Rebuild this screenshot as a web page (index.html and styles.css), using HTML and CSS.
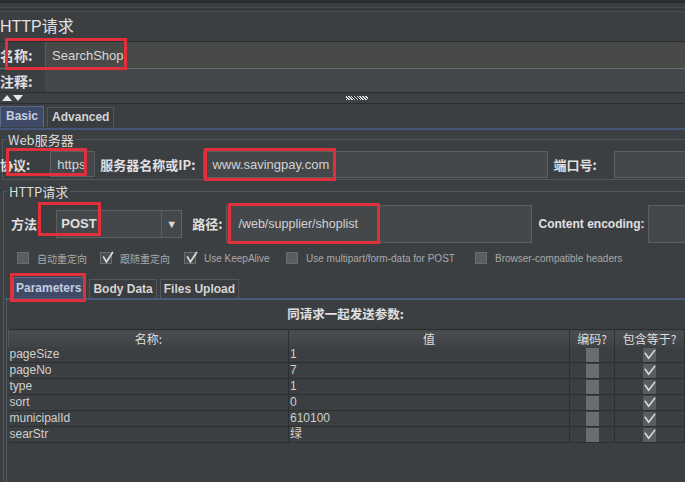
FILE: index.html
```html
<!DOCTYPE html>
<html>
<head>
<meta charset="utf-8">
<link rel="stylesheet" href="styles.css">
</head>
<body>
<div class="app">
  <div class="topbar"></div>
  <div class="title">HTTP请求</div>
  <div class="field-row name-row">
    <span class="lbl">名称:</span>
    <div class="txt">SearchShop</div>
  </div>
  <div class="field-row comment-row">
    <span class="lbl">注释:</span>
    <div class="txt"></div>
  </div>
  <div class="splitter">
    <svg class="arrows" width="24" height="8" viewBox="0 0 24 8"><polygon points="1,8 6,2 11,8" fill="#e8e8e8"/><polygon points="12,2 22,2 17,8" fill="#e8e8e8"/></svg>
    <span class="grip"></span>
  </div>
  <div class="tabbar main-tabs">
    <span class="tab active">Basic</span>
    <span class="tab">Advanced</span>
  </div>

  <fieldset class="group web">
    <legend>Web服务器</legend>
    <div class="srv-row">
      <span class="lbl proto-lbl">协议:</span>
      <div class="input proto">https</div>
      <span class="lbl host-lbl">服务器名称或IP:</span>
      <div class="input host">www.savingpay.com</div>
      <span class="lbl port-lbl">端口号:</span>
      <div class="input port"></div>
    </div>
  </fieldset>

  <fieldset class="group http">
    <legend>HTTP请求</legend>
    <div class="method-row">
      <span class="lbl method-lbl">方法:</span>
      <div class="select"><span class="sel-val">POST</span><span class="sel-btn">▼</span></div>
      <span class="lbl path-lbl">路径:</span>
      <div class="input path">/web/supplier/shoplist</div>
      <span class="lbl enc-lbl">Content encoding:</span>
      <div class="input enc"></div>
    </div>
    <div class="opt-row">
      <label class="opt o1"><span class="cb"></span><span class="cn">自动重定向</span></label>
      <label class="opt o2"><span class="cb on"><svg viewBox="0 0 12 12"><polyline points="2,5 5,10 11,1" fill="none" stroke="#dcdcdc" stroke-width="1.6"/></svg></span><span class="cn">跟随重定向</span></label>
      <label class="opt o3"><span class="cb on"><svg viewBox="0 0 12 12"><polyline points="2,5 5,10 11,1" fill="none" stroke="#dcdcdc" stroke-width="1.6"/></svg></span><span>Use KeepAlive</span></label>
      <label class="opt o4"><span class="cb"></span><span>Use multipart/form-data for POST</span></label>
      <label class="opt o5"><span class="cb"></span><span>Browser-compatible headers</span></label>
    </div>
    <div class="tabbar param-tabs">
      <span class="tab active">Parameters</span>
      <span class="tab">Body Data</span>
      <span class="tab">Files Upload</span>
    </div>
    <div class="panel">
      <div class="caption">同请求一起发送参数:</div>
      <table class="params">
        <colgroup><col class="c1"><col class="c2"><col class="c3"><col class="c4"></colgroup>
        <thead>
          <tr><th>名称:</th><th>值</th><th>编码?</th><th>包含等于?</th></tr>
        </thead>
        <tbody>
          <tr><td>pageSize</td><td>1</td><td class="ck"><span class="tcb"></span></td><td class="ck"><span class="tcb on"><svg viewBox="0 0 14 14"><polyline points="2,5 6,11 13,2" fill="none" stroke="#e4e4e4" stroke-width="1.6"/></svg></span></td></tr>
          <tr><td>pageNo</td><td>7</td><td class="ck"><span class="tcb"></span></td><td class="ck"><span class="tcb on"><svg viewBox="0 0 14 14"><polyline points="2,5 6,11 13,2" fill="none" stroke="#e4e4e4" stroke-width="1.6"/></svg></span></td></tr>
          <tr><td>type</td><td>1</td><td class="ck"><span class="tcb"></span></td><td class="ck"><span class="tcb on"><svg viewBox="0 0 14 14"><polyline points="2,5 6,11 13,2" fill="none" stroke="#e4e4e4" stroke-width="1.6"/></svg></span></td></tr>
          <tr><td>sort</td><td>0</td><td class="ck"><span class="tcb"></span></td><td class="ck"><span class="tcb on"><svg viewBox="0 0 14 14"><polyline points="2,5 6,11 13,2" fill="none" stroke="#e4e4e4" stroke-width="1.6"/></svg></span></td></tr>
          <tr><td>municipalId</td><td>610100</td><td class="ck"><span class="tcb"></span></td><td class="ck"><span class="tcb on"><svg viewBox="0 0 14 14"><polyline points="2,5 6,11 13,2" fill="none" stroke="#e4e4e4" stroke-width="1.6"/></svg></span></td></tr>
          <tr><td>searStr</td><td>绿</td><td class="ck"><span class="tcb"></span></td><td class="ck"><span class="tcb on"><svg viewBox="0 0 14 14"><polyline points="2,5 6,11 13,2" fill="none" stroke="#e4e4e4" stroke-width="1.6"/></svg></span></td></tr>
        </tbody>
      </table>
    </div>
  </fieldset>

  <div class="mark m-name"></div>
  <div class="mark m-proto"></div>
  <div class="mark m-host"></div>
  <div class="mark m-method"></div>
  <div class="mark m-path"></div>
  <div class="mark m-params"></div>
</div>
</body>
</html>
```

FILE: styles.css
```css
html, body {
  margin: 0;
  padding: 0;
  background: #3c3f41;
}
.app {
  position: relative;
  width: 685px;
  height: 482px;
  overflow: hidden;
  background: #3c3f41;
  color: #d6d6d6;
  font-family: "Liberation Sans", "Noto Sans CJK SC", sans-serif;
  font-size: 12px;
}
.topbar {
  height: 9px;
  border-top: 3px solid #2a2c2e;
  background: linear-gradient(#3a3d40 0 4px, #45484b 4px 5px, #383b3e 5px 8px, #4a4d50 8px 9px);
}
.title {
  height: 29px;
  line-height: 29px;
  font-size: 16px;
  color: #e2e2e2;
  font-family: "Liberation Sans", "Noto Sans CJK SC", sans-serif;
}
.field-row {
  display: flex;
}
.lbl {
  font-family: "Noto Sans CJK SC", "Liberation Sans", sans-serif;
  font-size: 13px;
  font-weight: 700;
  color: #e0e0e0;
  white-space: nowrap;
}
.field-row .lbl {
  width: 45px;
  display: flex;
  align-items: center;
  font-size: 14px;
}
.field-row .txt {
  flex: 1;
  display: flex;
  align-items: center;
  padding-left: 6px;
  font-size: 13px;
  color: #d8d8d8;
}
.name-row {
  height: 26px;
  border-top: 1px solid #2a2c2e;
  border-bottom: 1px solid #6a6d70;
}
.name-row .txt {
  background: #474a46;
  border-left: 1px solid #5a5d5a;
}
.comment-row {
  height: 23px;
}
.comment-row .txt {
  background: #45484b;
}
.splitter {
  height: 10px;
  border-top: 1px solid #2a2c2e;
  border-bottom: 1px solid #2a2c2e;
  background: #3e4143;
  display: flex;
  align-items: center;
}
.arrows {
  margin-left: 1px;
  margin-top: -2px;
}
.grip {
  margin-left: 321px;
  width: 22px;
  height: 4px;
  background: repeating-linear-gradient(45deg, #e0e0e0 0 1px, #2c2e30 1px 2px);
}
.tabbar {
  display: flex;
  align-items: flex-end;
  gap: 3px;
}
.main-tabs {
  height: 24px;
  border-bottom: 2px solid #45567a;
}
.tab {
  font-weight: 700;
  font-size: 12px;
  height: 19px;
  line-height: 19px;
  padding: 0 4px;
  border: 1px solid #55585b;
  border-bottom: none;
  background: #3a3d3f;
  color: #d4d4d4;
}
.tab.active {
  background: #3f4b66;
  border-color: #5a6a8c;
  color: #c4cde0;
  height: 20px;
}
.main-tabs .tab.active { padding: 0 5px; }
.main-tabs .tab { margin-bottom: 1px; }

.group {
  margin: 2px -20px 0 2px;
  padding: 2px 0 0 1px;
  border: 1px solid #55585b;
  min-width: 0;
}
.group legend {
  font-family: "Noto Sans CJK SC", "Liberation Sans", sans-serif;
  font-size: 13px;
  line-height: 15px;
  padding: 0 2px;
  margin-left: 2px;
  color: #dcdcdc;
}
.input {
  background: #45484a;
  border: 1px solid #5c5f5e;
  display: flex;
  align-items: center;
  padding-left: 8px;
  font-size: 13px;
  color: #d2d2d2;
  box-sizing: border-box;
}
.srv-row, .method-row {
  display: flex;
  align-items: center;
}
.srv-row > *, .method-row > * {
  flex-shrink: 0;
}
.srv-row {
  height: 30px;
}
.proto-lbl { margin-left: -4px; }
.proto {
  margin-left: 20px;
  width: 45px;
  height: 26px;
  padding-left: 6px;
}
.host-lbl { margin-left: 5px; }
.host {
  margin-left: 8px;
  width: 345px;
  height: 27px;
}
.port-lbl { margin-left: 5px; }
.port {
  margin-left: 17px;
  width: 90px;
  height: 27px;
}
.http {
  margin-top: 4px;
  padding-top: 4px;
  margin-left: 3px;
  height: 400px;
}
.method-row {
  height: 41px;
}
.method-lbl { margin-left: 6px; }
.select {
  margin-left: 15px;
  width: 126px;
  height: 28px;
  box-sizing: border-box;
  background: #45484a;
  border: 1px solid #5c5f5e;
  display: flex;
}
.sel-val {
  flex: 1;
  display: flex;
  align-items: center;
  padding-left: 4px;
  font-weight: 700;
  font-size: 13px;
  color: #e0e0e0;
}
.sel-btn {
  width: 19px;
  border-left: 1px solid #5c5f5e;
  display: flex;
  align-items: center;
  justify-content: center;
  font-size: 11px;
  color: #d8d8d8;
}
.path-lbl { margin-left: 10px; }
.path {
  margin-left: 4px;
  width: 306px;
  height: 38px;
  padding-left: 11px;
  font-size: 12.5px;
}
.enc-lbl {
  margin-left: 6px;
  font-family: "Liberation Sans", sans-serif;
  font-size: 12px;
  font-weight: 700;
}
.enc {
  margin-left: 4px;
  width: 60px;
  height: 38px;
}
.opt-row {
  margin-top: 4px;
  height: 20px;
  display: flex;
  align-items: center;
  padding-left: 12px;
}
.opt {
  display: flex;
  align-items: center;
  font-size: 10px;
  color: #a9a9a9;
  white-space: nowrap;
  flex-shrink: 0;
}
.o1 { width: 83px; }
.o2 { width: 84px; }
.o3 { width: 102px; }
.o4 { width: 189px; }
.cn {
  font-family: "Noto Sans CJK SC", sans-serif;
  font-size: 10px;
}
.cb {
  width: 12px;
  height: 12px;
  box-sizing: border-box;
  background: #5a5c5e;
  border: 1px solid #696b6d;
  margin-right: 8px;
  position: relative;
}
.cb svg {
  position: absolute;
  left: 0;
  top: -2px;
  width: 13px;
  height: 13px;
}
.cb.on { background: #4a4c4e; }
.param-tabs {
  margin-top: 6px;
  height: 24px;
  border-bottom: 2px solid #4a5a7a;
  padding-left: 8px;
  gap: 3px;
}
.param-tabs .tab { height: 18px; line-height: 18px; padding: 0 3px; }
.param-tabs .tab.active {
  height: 20px;
  line-height: 20px;
  padding: 0 2px;
  margin-right: 2px;
}
.panel {
  margin-left: 1px;
  border-left: 1px solid #55585b;
  height: 300px;
}
.caption {
  height: 27px;
  line-height: 27px;
  text-align: center;
  padding-right: 20px;
  font-family: "Noto Sans CJK SC", sans-serif;
  font-weight: 700;
  font-size: 12.5px;
  color: #e0e0e0;
}
.params {
  margin-top: 2px;
  margin-left: 1px;
  width: 676px;
  table-layout: fixed;
  border-collapse: collapse;
  border-top: 1px solid #2a2c2e;
}
.c1 { width: 280px; }
.c2 { width: 281px; }
.c3 { width: 45px; }
.c4 { width: 70px; }
.params th {
  height: 17px;
  padding: 0;
  font-family: "Noto Sans CJK SC", sans-serif;
  font-weight: 400;
  font-size: 12px;
  color: #dedede;
  background: linear-gradient(#4b4e51, #3f4244);
  border-right: 1px solid #2e3032;
  border-left: 1px solid #55585b;
  line-height: 16px;
}
.params td {
  height: 15px;
  padding: 0 0 0 1px;
  font-size: 12px;
  line-height: 15px;
  color: #cfcfcf;
  border-bottom: 1px solid #2c2e30;
  border-right: 1px solid #2c2e30;
  white-space: nowrap;
  overflow: hidden;
}
.params td.ck { text-align: center; padding: 0; }
.tcb {
  display: inline-block;
  vertical-align: middle;
  width: 13px;
  height: 14px;
  background: #6a6c6e;
  position: relative;
}
.tcb.on { background: #5a5c5e; }
.tcb svg {
  position: absolute;
  left: 0;
  top: 0;
  width: 13px;
  height: 13px;
}
.mark {
  position: absolute;
  border: 3px solid #e0303c;
  box-sizing: border-box;
}
.m-name { left: 5px; top: 38px; width: 122px; height: 32px; }
.m-proto { left: 6px; top: 148px; width: 81px; height: 28px; }
.m-host { left: 204px; top: 148px; width: 132px; height: 33px; }
.m-method { left: 38px; top: 202px; width: 63px; height: 34px; }
.m-path { left: 228px; top: 203px; width: 152px; height: 41px; }
.m-params { left: 10px; top: 273px; width: 76px; height: 29px; }
```
